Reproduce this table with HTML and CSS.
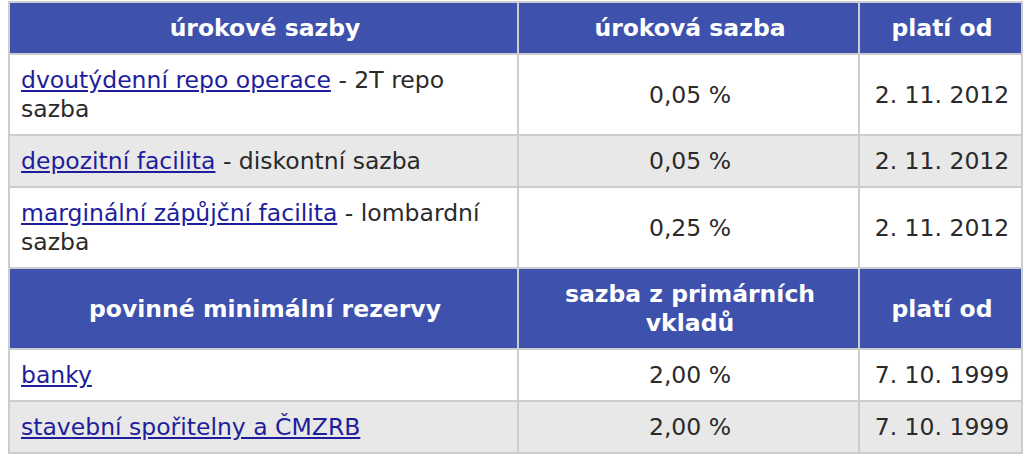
FILE: index.html
```html
<!DOCTYPE html>
<html lang="cs">
<head>
<meta charset="utf-8">
<title>Sazby</title>
<link rel="stylesheet" href="styles.css">
</head>
<body>
<table class="rates">
  <colgroup>
    <col class="c1"><col class="c2"><col class="c3">
  </colgroup>
  <tr class="head">
    <th>úrokové sazby</th>
    <th>úroková sazba</th>
    <th>platí od</th>
  </tr>
  <tr>
    <td class="name"><a href="#">dvoutýdenní repo operace</a> - 2T repo sazba</td>
    <td>0,05 %</td>
    <td>2. 11. 2012</td>
  </tr>
  <tr class="alt">
    <td class="name"><a href="#">depozitní facilita</a> - diskontní sazba</td>
    <td>0,05 %</td>
    <td>2. 11. 2012</td>
  </tr>
  <tr>
    <td class="name"><a href="#">marginální zápůjční facilita</a> - lombardní sazba</td>
    <td>0,25 %</td>
    <td>2. 11. 2012</td>
  </tr>
  <tr class="head">
    <th>povinné minimální rezervy</th>
    <th>sazba z primárních vkladů</th>
    <th>platí od</th>
  </tr>
  <tr>
    <td class="name"><a href="#">banky</a></td>
    <td>2,00 %</td>
    <td>7. 10. 1999</td>
  </tr>
  <tr class="alt">
    <td class="name"><a href="#">stavební spořitelny a ČMZRB</a></td>
    <td>2,00 %</td>
    <td>7. 10. 1999</td>
  </tr>
</table>
</body>
</html>
```

FILE: styles.css
```css
html, body {
  margin: 0;
  padding: 0;
  background: #ffffff;
}
body {
  padding: 1px 0 0 8px;
  font-family: "DejaVu Sans", Verdana, sans-serif;
  font-size: 23.5px;
  color: #2a2a2a;
}
.rates {
  border-collapse: collapse;
  table-layout: fixed;
  width: 1013px;
}
.c1 { width: 509px; }
.c2 { width: 341px; }
.c3 { width: 163px; }
.rates th,
.rates td {
  border: 2px solid #cdcdcd;
  padding: 11px 8px 10px 11px;
  line-height: 29px;
  text-align: center;
  vertical-align: middle;
}
.rates th {
  background: #3e52ad;
  color: #ffffff;
  font-weight: bold;
}
.rates td.name {
  text-align: left;
}
.rates tr.alt td {
  background: #e8e8e8;
}
.rates a {
  color: #1e1e9c;
  text-decoration: underline;
}
```
